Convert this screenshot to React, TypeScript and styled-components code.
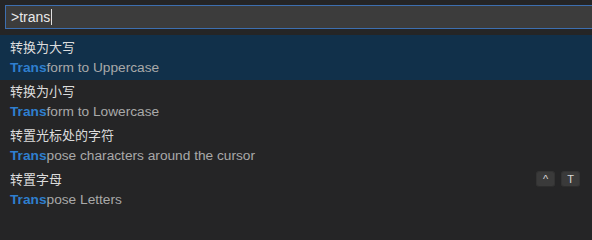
import React from 'react';
import styled, { createGlobalStyle } from 'styled-components';

const GlobalStyle = createGlobalStyle`
  html, body {
    margin: 0;
    padding: 0;
    background: #252526;
  }
  body {
    font-family: "Liberation Sans", "Noto Sans CJK SC", sans-serif;
    -webkit-font-smoothing: antialiased;
  }
`;

const Palette = styled.div`
  width: 592px;
  height: 215px;
  overflow: hidden;
  background: #252526;
  padding-top: 5px;
  box-sizing: border-box;
`;

const InputWrap = styled.div`
  margin-left: 5px;
  margin-right: -4px;
  height: 24px;
  box-sizing: border-box;
  background: #3c3c3c;
  border: 1px solid #3d6fb0;
  display: flex;
  align-items: center;
  padding-left: 5px;
`;

const InputText = styled.span`
  color: #e8e8e8;
  font-size: 14px;
`;

const Caret = styled.span`
  display: inline-block;
  width: 1px;
  height: 16px;
  background: #e0e0e0;
  margin-left: 1px;
`;

const List = styled.div`
  margin-top: 6px;
`;

const Row = styled.div<{ $selected?: boolean }>`
  height: 44px;
  display: flex;
  align-items: center;
  justify-content: space-between;
  padding: 0 12px 0 10px;
  background: ${({ $selected }) => ($selected ? '#11304a' : 'transparent')};
  &:first-child {
    height: 45px;
  }
`;

const Texts = styled.div`
  display: flex;
  flex-direction: column;
  gap: 4px;
`;

const Label = styled.div`
  color: #dcdcdc;
  font-size: 13px;
  line-height: 16px;
`;

const Description = styled.div`
  color: #a9a9a9;
  font-size: 13.7px;
  line-height: 16px;
`;

const Match = styled.span`
  color: #2f7fcf;
  font-weight: bold;
`;

const Keys = styled.div`
  display: flex;
  gap: 6px;
  align-self: flex-start;
  margin-top: 3px;
`;

const Key = styled.span`
  min-width: 19px;
  height: 16px;
  box-sizing: border-box;
  display: flex;
  align-items: center;
  justify-content: center;
  background: #3a3a3a;
  border: 1px solid #333;
  border-bottom-color: #2c2c2c;
  border-radius: 3px;
  color: #d8d8d8;
  font-size: 11px;
`;

type Item = { label: string; rest: string; keys?: string[] };

const items: Item[] = [
  { label: '转换为大写', rest: 'form to Uppercase' },
  { label: '转换为小写', rest: 'form to Lowercase' },
  { label: '转置光标处的字符', rest: 'pose characters around the cursor' },
  { label: '转置字母', rest: 'pose Letters', keys: ['^', 'T'] },
];

const App: React.FC = () => {
  return (
    <Palette>
      <GlobalStyle />
      <InputWrap>
        <InputText>&gt;trans</InputText>
        <Caret />
      </InputWrap>
      <List>
        {items.map((item, i) => (
          <Row key={item.label} $selected={i === 0}>
            <Texts>
              <Label>{item.label}</Label>
              <Description>
                <Match>Trans</Match>
                {item.rest}
              </Description>
            </Texts>
            {item.keys && (
              <Keys>
                {item.keys.map((k) => (
                  <Key key={k}>{k}</Key>
                ))}
              </Keys>
            )}
          </Row>
        ))}
      </List>
    </Palette>
  );
};

export default App;
